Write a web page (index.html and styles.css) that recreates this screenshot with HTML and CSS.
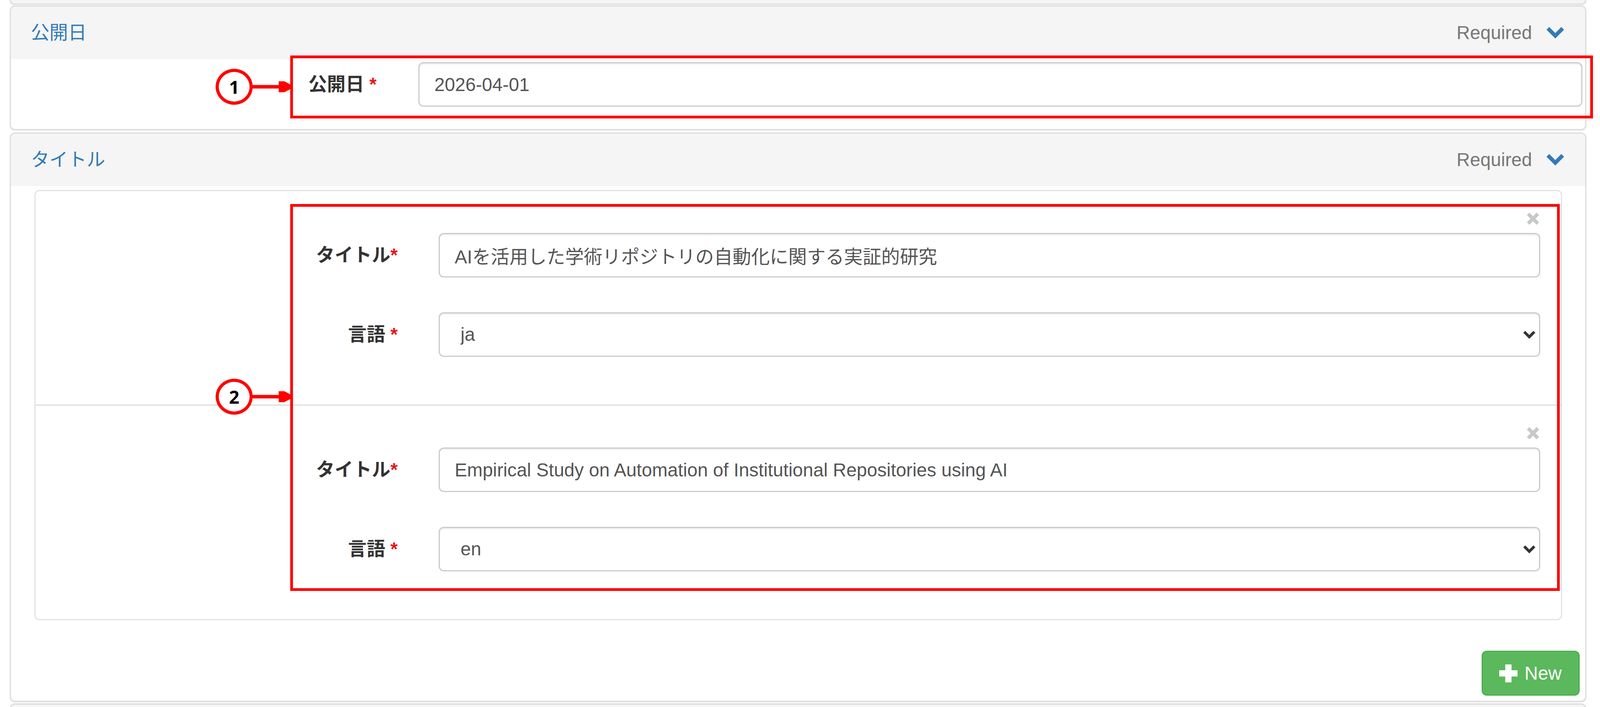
FILE: index.html
```html
<!DOCTYPE html>
<html lang="ja">
<head>
<meta charset="utf-8">
<title>公開日 / タイトル</title>
<link rel="stylesheet" href="styles.css">
</head>
<body>
<div class="page">
  <div class="panel panel-prev"></div>

  <section class="panel panel-date">
    <div class="panel-heading">
      <span class="panel-title">公開日</span>
      <span class="req">Required
        <svg class="chev" viewBox="0 0 45 29" width="45" height="29"><polygon points="0,7 7,0 22.5,15.5 38,0 45,7 22.5,29.5"/></svg>
      </span>
    </div>
    <div class="panel-body body-date">
      <div class="form-row row-date">
        <label class="ctl-label">公開日 <span class="star">*</span></label>
        <input class="form-control" type="text" value="2026-04-01">
      </div>
    </div>
  </section>

  <section class="panel panel-title-sec">
    <div class="panel-heading">
      <span class="panel-title">タイトル</span>
      <span class="req">Required
        <svg class="chev" viewBox="0 0 45 29" width="45" height="29"><polygon points="0,7 7,0 22.5,15.5 38,0 45,7 22.5,29.5"/></svg>
      </span>
    </div>
    <div class="panel-body body-title">
      <div class="well">
        <div class="item">
          <div class="close-row">
            <svg class="close-x" viewBox="0 0 35 33" width="35" height="33"><path d="M5 4 L30 29 M30 4 L5 29"/></svg>
          </div>
          <div class="form-row">
            <label class="ctl-label">タイトル<span class="star">*</span></label>
            <input class="form-control" type="text" value="AIを活用した学術リポジトリの自動化に関する実証的研究">
          </div>
          <div class="form-row row-lang">
            <label class="ctl-label">言語 <span class="star">*</span></label>
            <div class="select-wrap">
              <select class="form-control select"><option>ja</option></select>
              <svg class="sel-chev" viewBox="0 0 34 22" width="34" height="22"><polyline points="4,4 17,17 30,4"/></svg>
            </div>
          </div>
        </div>
        <div class="item">
          <div class="close-row">
            <svg class="close-x" viewBox="0 0 35 33" width="35" height="33"><path d="M5 4 L30 29 M30 4 L5 29"/></svg>
          </div>
          <div class="form-row">
            <label class="ctl-label">タイトル<span class="star">*</span></label>
            <input class="form-control" type="text" value="Empirical Study on Automation of Institutional Repositories using AI">
          </div>
          <div class="form-row row-lang">
            <label class="ctl-label">言語 <span class="star">*</span></label>
            <div class="select-wrap">
              <select class="form-control select"><option>en</option></select>
              <svg class="sel-chev" viewBox="0 0 34 22" width="34" height="22"><polyline points="4,4 17,17 30,4"/></svg>
            </div>
          </div>
        </div>
      </div>
      <div class="btn-row">
        <button class="btn-new" type="button">
          <svg class="plus" viewBox="0 0 47 46" width="47" height="46"><rect x="15.5" y="0" width="16" height="46"/><rect x="0" y="15" width="47" height="16"/></svg>
          <span>New</span>
        </button>
      </div>
    </div>
  </section>

  <div class="panel panel-next"></div>

  <div class="callout callout-1"></div>
  <div class="callout callout-2"></div>

  <div class="marker marker-1">
    <div class="num">1</div>
    <svg class="arrow" viewBox="0 0 98 28" width="98" height="28"><line x1="0" y1="14" x2="75" y2="14"/><polygon points="71,0 98,14 71,28"/></svg>
  </div>
  <div class="marker marker-2">
    <div class="num">2</div>
    <svg class="arrow" viewBox="0 0 98 28" width="98" height="28"><line x1="0" y1="14" x2="75" y2="14"/><polygon points="71,0 98,14 71,28"/></svg>
  </div>
</div>
</body>
</html>
```
FILE: styles.css
```css
* { box-sizing: border-box; }

body {
  margin: 0;
  background: #fff;
  font-family: "Liberation Sans", "Noto Sans CJK JP", sans-serif;
  font-size: 47.6px;
  line-height: 1.42857;
  color: #333;
}

.page {
  position: relative;
  padding: 0 35px 0 25px;
}

.panel {
  background: #fff;
  border: 3px solid #ddd;
  border-radius: 13px;
  box-shadow: 0 3px 3px rgba(0, 0, 0, 0.05);
}

.panel-prev {
  height: 12px;
  border-top: none;
  border-radius: 0 0 13px 13px;
  background: #f5f5f5;
  margin-bottom: 2px;
}

.panel-next {
  height: 40px;
  margin-top: 4px;
  border-bottom: none;
  border-radius: 13px 13px 0 0;
  background: #f5f5f5;
}

.panel-date { margin-bottom: 6px; }

.panel-heading {
  height: 134px;
  background: #f5f5f5;
  display: flex;
  align-items: center;
  justify-content: space-between;
  padding: 0 54px 0 51px;
  border-radius: 10px 10px 0 0;
}

.panel-title {
  color: #337ab7;
}

.req {
  display: flex;
  align-items: center;
  gap: 37px;
  color: #777;
}

.chev { fill: #337ab7; display: block; }

.body-date {
  padding: 8px 0 57px 0;
}

.form-row {
  display: grid;
  grid-template-columns: 927px 1fr;
  column-gap: 105px;
  align-items: center;
  padding-right: 53px;
}

.row-date {
  grid-template-columns: 936px 1fr;
  column-gap: 107px;
  padding-right: 7px;
}

.ctl-label {
  text-align: right;
  font-weight: bold;
  color: #333;
}

.star { color: #e8131b; }

.form-control {
  display: block;
  width: 100%;
  height: 114px;
  margin: 0;
  padding: 0 38px;
  font: inherit;
  color: #555;
  background: #fff;
  border: 3px solid #ccc;
  border-radius: 13px;
  box-shadow: inset 0 3px 3px rgba(0, 0, 0, 0.075);
  outline: none;
}

.select-wrap { position: relative; }

.select {
  -webkit-appearance: none;
  appearance: none;
  padding-left: 53px;
}

.sel-chev {
  position: absolute;
  right: 11px;
  top: 50%;
  transform: translateY(-50%);
  fill: none;
  stroke: #333;
  stroke-width: 7;
}

.body-title {
  padding: 10px 0 13px 0;
}

.well {
  margin: 0 59px 0 60px;
  border: 3px solid #e3e3e3;
  border-radius: 13px;
  background: #fff;
}

.item {
  padding: 54px 0 122px 0;
}

.item + .item {
  border-top: 3px solid #ddd;
}

.close-row {
  display: flex;
  justify-content: flex-end;
  padding-right: 54px;
  height: 33px;
  margin-bottom: 20px;
}

.close-x {
  display: block;
  fill: none;
  stroke: #c8c8c8;
  stroke-width: 9;
}

.row-lang { margin-top: 89px; }

.btn-row {
  display: flex;
  justify-content: flex-end;
  margin-top: 78px;
  padding-right: 14px;
}

.btn-new {
  display: flex;
  align-items: center;
  gap: 18px;
  height: 115px;
  padding: 0 43px 0 42px;
  font: inherit;
  color: #fff;
  background: #5cb85c;
  border: 3px solid #4cae4c;
  border-radius: 13px;
}

.plus { display: block; fill: #fff; }

.callout {
  position: absolute;
  border: 7px solid #ff0000;
}

.callout-1 {
  left: 743px;
  top: 142px;
  width: 3335px;
  height: 161px;
}

.callout-2 {
  left: 743px;
  top: 522px;
  width: 3250px;
  height: 990px;
}

.marker {
  position: absolute;
  left: 552px;
  display: flex;
  align-items: center;
}

.marker-1 { top: 176px; }
.marker-2 { top: 969px; }

.num {
  width: 95px;
  height: 92px;
  border: 8px solid #ff0000;
  border-radius: 50%;
  background: #fff;
  display: flex;
  align-items: center;
  justify-content: center;
  font-family: "Open Sans", "Liberation Sans", sans-serif;
  font-weight: 700;
  font-size: 46px;
  line-height: 1;
  color: #000;
}

.arrow {
  display: block;
  stroke: #ff0000;
  stroke-width: 9;
  fill: #ff0000;
}
```
